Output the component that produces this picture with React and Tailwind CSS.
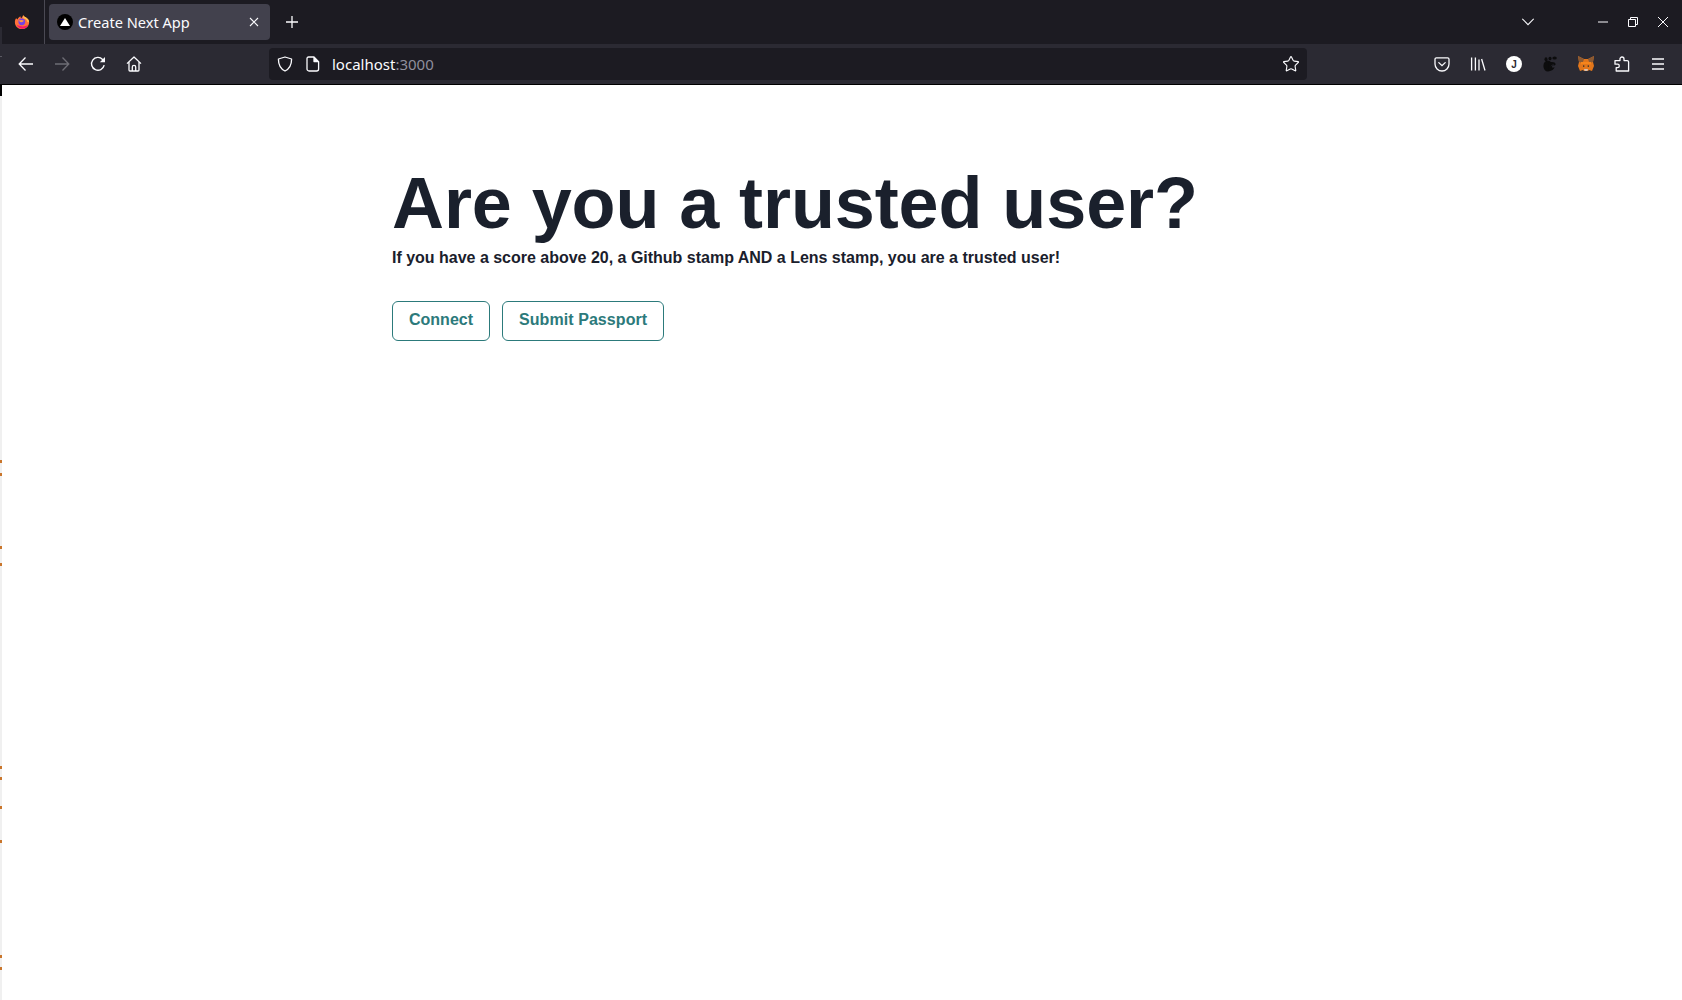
import React from 'react';
import { Star } from 'lucide-react';

const FirefoxLogo = () => (
  <svg width="16" height="16" viewBox="0 0 18 18">
    <path d="M9 17C4.6 17 1 13.6 1 9.2 1 7.6 1.5 6 2.4 4.8L4 6.2C4.6 4.4 6 3 7.4 2.6 7 3.6 7.6 4.4 8.6 4.6L10.4 1C11 2.6 12 3 13.6 4 15.6 5.2 17 7 17 9.2 17 13.6 13.4 17 9 17Z" fill="#ff7139" />
    <path d="M10.4 1C11 2.6 12 3 13.6 4 15.6 5.2 17 7 17 9.2L15 9C14.6 6.6 12.6 5 10.4 5Z" fill="#ffbd4f" />
    <path d="M3 12C4.4 15 7 16.6 9.4 16.6 12.4 16.6 15 14.6 16 12 13.6 14 9 14.4 7 13.4 5.4 13 4 12.6 3 12Z" fill="#f5156c" />
    <circle cx="8.8" cy="8.8" r="3.8" fill="#7542e5" />
    <path d="M5.4 7.4C7 6.6 9 6.4 11 7.4 10.6 9 9 9.4 7.6 9.2 6.6 9 5.8 8.4 5.4 7.4Z" fill="#ff9a3d" />
  </svg>
);

const Back = ({ color = '#fbfbfe', flip = false }) => (
  <svg width="16" height="16" viewBox="0 0 16 16" fill="none" stroke={color} strokeWidth="1.3" className={flip ? 'rotate-180' : ''}>
    <path d="M15 8H1.5M7.5 1.5 1.2 8l6.3 6.5" />
  </svg>
);

const Reload = () => (
  <svg width="16" height="16" viewBox="0 0 16 16" fill="none" stroke="#fbfbfe" strokeWidth="1.4">
    <path d="M14.2 9.2A6.4 6.4 0 1 1 12.6 3.4L14.6 5" />
    <path d="M15 1v5.2H9.8Z" fill="#fbfbfe" stroke="none" />
  </svg>
);

const Home = () => (
  <svg width="16" height="16" viewBox="0 0 16 16" fill="none" stroke="#fbfbfe" strokeWidth="1.3" strokeLinejoin="round">
    <path d="M1 7.6 8 1l7 6.6M3 6v8a1 1 0 0 0 1 1h8a1 1 0 0 0 1-1V6" />
    <path d="M6.3 15v-4a1.7 1.7 0 0 1 3.4 0v4" />
  </svg>
);

const Shield = () => (
  <svg width="16" height="16" viewBox="0 0 16 16" fill="none" stroke="#fbfbfe" strokeWidth="1.3" strokeLinejoin="round">
    <path d="M8 1 14.6 3c0 6-1.6 9.6-6.6 12C3 12.6 1.4 9 1.4 3Z" />
  </svg>
);

const PageIcon = () => (
  <svg width="14" height="16" viewBox="0 0 14 16" fill="none" stroke="#fbfbfe" strokeWidth="1.3" strokeLinejoin="round">
    <path d="M2.5 1H8l4.6 4.6V13a2 2 0 0 1-2 2H3a2 2 0 0 1-2-2V2.5A1.5 1.5 0 0 1 2.5 1Z" />
    <path d="M8 1v4.6h4.6" fill="#fbfbfe" />
  </svg>
);

const Pocket = () => (
  <svg width="16" height="16" viewBox="0 0 16 16" fill="none" stroke="#fbfbfe" strokeWidth="1.3">
    <path d="M2.4 1.8h11.2A1.4 1.4 0 0 1 15 3.2V8A7 7 0 0 1 1 8V3.2a1.4 1.4 0 0 1 1.4-1.4Z" />
    <path d="M4.8 6.6 8 9.6l3.2-3" strokeLinecap="round" />
  </svg>
);

const Library = () => (
  <svg width="16" height="16" viewBox="0 0 16 16" fill="none" stroke="#fbfbfe" strokeWidth="1.3">
    <path d="M1.6 1.5v13M5.4 1.5v13M9 3.5v11M11.6 3 15 14.5" />
  </svg>
);

const GnomeFoot = () => (
  <svg width="16" height="16" viewBox="0 0 16 16" fill="#0c0c0d">
    <ellipse cx="5.8" cy="10" rx="4.4" ry="5.6" />
    <ellipse cx="4" cy="3.2" rx="1.5" ry="2" />
    <ellipse cx="8" cy="2.6" rx="1.6" ry="1.8" />
    <ellipse cx="12.6" cy="2" rx="2.2" ry="1.6" />
    <path d="M7 6.6c3-1 6.6-.4 6.6 1.6S9.6 9 9.2 10.4c-.3 1 2 1.4 3.4.8-.8 2.4-3.6 4-6 3.6Z" />
    <path d="M9 10.2c.6-1 2-1.4 3-1.2" stroke="#2b2a33" strokeWidth="0.8" fill="none" />
  </svg>
);

const MetaMask = () => (
  <svg className="-mx-[1px]" width="18" height="18" viewBox="0 0 18 18">
    <path d="M1 1 7 4h4l6-3-1 6 1 4-2 5-3-1-1 1H7l-1-1-3 1-2-5 1-4Z" fill="#e2761b" />
    <path d="M1 1 7 4 5.6 8 2 7ZM17 1 11 4l1.4 4L16 7Z" fill="#8a5a34" />
    <path d="M6 10.2 8 11l-2 1ZM12 10.2 10 11l2 1Z" fill="#2a2a2a" />
    <path d="M7 14h4l-.6 2H7.6Z" fill="#d7c1b3" />
    <path d="M4 7h10v2.4L12 9H6L4 9.4Z" fill="#f6851b" />
  </svg>
);

const Puzzle = () => (
  <svg width="16" height="16" viewBox="0 0 16 16" fill="none" stroke="#fbfbfe" strokeWidth="1.3" strokeLinejoin="round">
    <path d="M14.6 15H2.2v-3.4h1.4a1.7 1.7 0 0 0 0-3.4H1L1 4.6h5V3a2 2 0 0 1 4 0v1.6h3.2a1.4 1.4 0 0 1 1.4 1.4Z" />
  </svg>
);

const Menu = () => (
  <svg width="16" height="16" viewBox="0 0 16 16" stroke="#fbfbfe" strokeWidth="1.3">
    <path d="M2 3h12M2 8h12M2 13h12" />
  </svg>
);

const marks = [
  { id: 461, gap: 'mt-[364px]' },
  { id: 474, gap: 'mt-[10px]' },
  { id: 547, gap: 'mt-[70px]' },
  { id: 564, gap: 'mt-[14px]' },
  { id: 767, gap: 'mt-[200px]' },
  { id: 778, gap: 'mt-[8px]' },
  { id: 807, gap: 'mt-[26px]' },
  { id: 841, gap: 'mt-[31px]' },
  { id: 956, gap: 'mt-[112px]' },
  { id: 968, gap: 'mt-[9px]' },
];

const App = () => {
  return (
    <div className="flex h-[1000px] w-[1682px] flex-col overflow-hidden bg-white">
      {/* title bar */}
      <div className="relative flex h-[44px] shrink-0 items-center bg-[#1c1b22] font-['Noto_Sans',sans-serif]">
        <div className="absolute bottom-0 left-0 h-[17px] w-[2px] bg-[#2b2a33]" />
        <div className="flex h-full w-[45px] shrink-0 items-center justify-center border-r border-[#4a4953]">
          <FirefoxLogo />
        </div>
        <div className="ml-[4px] flex h-[36px] w-[221px] shrink-0 items-center rounded-[4px] bg-[#42414d] pl-[8px] pr-[11px]">
          <span className="flex h-[16px] w-[16px] items-center justify-center rounded-full bg-black">
            <span className="h-0 w-0 border-x-[5px] border-b-[8px] border-x-transparent border-b-white" />
          </span>
          <span className="ml-[5px] flex-1 pt-[1px] text-[14.6px] text-[#fbfbfe]">Create Next App</span>
          <svg width="10" height="10" viewBox="0 0 10 10" stroke="#fbfbfe" strokeWidth="1.1"><path d="M1 1l8 8M9 1l-8 8" /></svg>
        </div>
        <svg className="ml-[16px]" width="12" height="12" viewBox="0 0 12 12" stroke="#fbfbfe" strokeWidth="1.3"><path d="M6 0v12M0 6h12" /></svg>
        <div className="ml-auto flex items-center pr-[14px]">
          <svg className="mr-[64px]" width="12" height="8" viewBox="0 0 12 8" fill="none" stroke="#fbfbfe" strokeWidth="1.1"><path d="M.3.8 6 6.6 11.7.8" /></svg>
          <svg className="mr-[20px]" width="10" height="10" viewBox="0 0 10 10" stroke="#fbfbfe" strokeWidth="1"><path d="M0 5h10" /></svg>
          <svg className="mr-[20px]" width="10" height="10" viewBox="0 0 10 10" fill="none" stroke="#fbfbfe" strokeWidth="1"><path d="M.5 2.5h7v7h-7zM2.5 2.5v-2h7v7h-2" /></svg>
          <svg width="10" height="10" viewBox="0 0 10 10" stroke="#fbfbfe" strokeWidth="1"><path d="M0 0l10 10M10 0L0 10" /></svg>
        </div>
      </div>

      {/* toolbar */}
      <div className="relative flex h-[41px] shrink-0 items-center border-b border-black bg-[#2b2a33] font-['Noto_Sans',sans-serif]">
        <div className="absolute left-0 top-[12px] h-[1px] w-[2px] bg-[#5b5a63]" />
        <div className="flex w-[269px] shrink-0 items-center gap-[20px] pl-[18px]">
          <Back />
          <Back color="#6e6d75" flip />
          <Reload />
          <Home />
        </div>
        <div className="flex h-[32px] w-[1038px] shrink-0 items-center rounded-[4px] bg-[#1c1b22] pl-[8px] pr-[7px]">
          <Shield />
          <span className="ml-[13px]"><PageIcon /></span>
          <span className="ml-[12px] text-[15px] text-[#fbfbfe]">localhost<span className="text-[#8f8f9d]">:3000</span></span>
          <Star className="ml-auto" size={18} color="#fbfbfe" strokeWidth={1.5} />
        </div>
        <div className="ml-auto flex items-center gap-[20px] pr-[16px]">
          <Pocket />
          <Library />
          <span className="flex h-[16px] w-[16px] items-center justify-center rounded-full bg-white font-['Liberation_Sans',sans-serif] text-[10px] font-bold text-[#2b2a33]">J</span>
          <GnomeFoot />
          <MetaMask />
          <Puzzle />
          <Menu />
        </div>
      </div>

      {/* page */}
      <div className="flex min-h-0 flex-1">
        <div className="flex h-full w-[2px] shrink-0 flex-col bg-[#f0f0f0]">
          <div className="h-[11px] shrink-0 bg-black" />
          {marks.map((m) => (
            <div key={m.id} className={`h-[3px] shrink-0 bg-[#c9762c] ${m.gap}`} />
          ))}
        </div>
        <div className="flex-1 pl-[390px] pt-[76px] font-['Liberation_Sans',Arial,sans-serif] text-[#1a202c]">
          <h1 className="text-[72px] font-bold leading-[85px] tracking-[-0.1px]">Are you a trusted user?</h1>
          <p className="text-[16px] font-bold leading-[24px] tracking-[-0.01px]">If you have a score above 20, a Github stamp AND a Lens stamp, you are a trusted user!</p>
          <div className="mt-[31px] flex gap-[12px]">
            <button className="h-[40px] rounded-[6px] border border-[#2c7a7b] px-[16px] pb-[2px] text-[16px] font-bold text-[#2c7a7b]">Connect</button>
            <button className="h-[40px] rounded-[6px] border border-[#2c7a7b] px-[16px] pb-[2px] text-[16px] font-bold tracking-[0.07px] text-[#2c7a7b]">Submit Passport</button>
          </div>
        </div>
      </div>
    </div>
  );
};

export default App;
